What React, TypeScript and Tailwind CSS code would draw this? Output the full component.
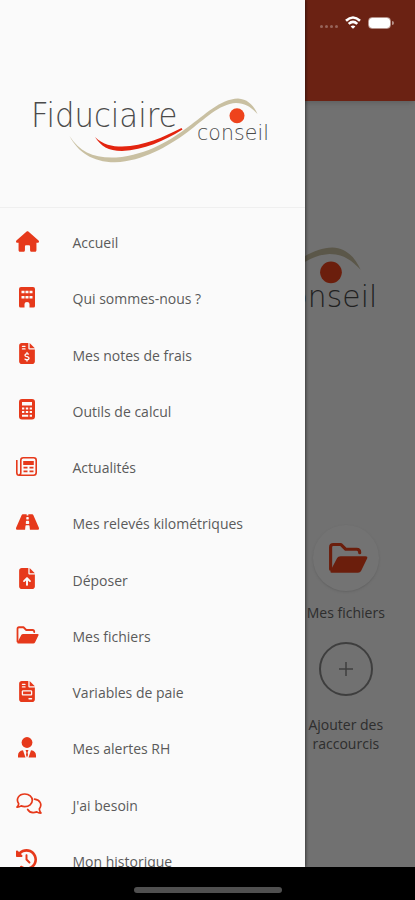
import type { ReactNode } from "react"
import {
    FaHouse,
    FaFileInvoiceDollar,
    FaFileInvoice,
    FaFileArrowUp,
    FaClockRotateLeft,
} from "react-icons/fa6"
import { FaRoad } from "react-icons/fa"

type MenuItem = {
    label:string;
    icon:ReactNode;
}

const FolderIcon = ({ className }:{ className:string }) => (
    <svg viewBox="0 0 46 36" className={className}>
        <path
            d="M3 31V5.500Q3 2.500 6 2.500H15L20.500 8H33Q36.500 8 36.500 12"
            fill="none"
            stroke="currentColor"
            strokeWidth="3.600"
            strokeLinecap="round"
            strokeLinejoin="round"
        />
        <path
            d="M14.500 16H43Q46 16 45 18.500L38 33Q37 35 34.500 35H4Q2 35 3 32.500L10.500 18Q11.500 16 14.500 16Z"
            fill="currentColor"
        />
    </svg>
)

const BuildingIcon = () => (
    <svg viewBox="0 0 16 21" className="h-[21px] w-4">
        <path
            fill="currentColor"
            fillRule="evenodd"
            d="M2 0H14Q16 0 16 2V19Q16 20.500 14.500 20.500H10.500V17Q10.500 15 8 15T5.500 17V20.500H1.500Q0 20.500 0 19V2Q0 0 2 0ZM2.500 3.800V6.300H5.500V3.800ZM6.500 3.800V6.300H9.500V3.800ZM10.500 3.800V6.300H13.500V3.800ZM2.500 9V11.500H5.500V9ZM6.500 9V11.500H9.500V9ZM10.500 9V11.500H13.500V9Z"
        />
    </svg>
)

const CalculatorIcon = () => (
    <svg viewBox="0 0 16 21" className="h-[21px] w-4">
        <path
            fill="currentColor"
            fillRule="evenodd"
            d="M3 0H13Q16 0 16 3V17.500Q16 20.500 13 20.500H3Q0 20.500 0 17.500V3Q0 0 3 0ZM3 3V6.500H13V3ZM3 8.500V10.500H5.300V8.500ZM6.800 8.500V10.500H9.200V8.500ZM10.700 8.500V10.500H13V8.500ZM3 12V14H5.300V12ZM6.800 12V14H9.200V12ZM10.700 12V14H13V12ZM3 15.700V17.700H9.200V15.700ZM10.700 15.700V17.700H13V15.700Z"
        />
    </svg>
)

const NewsIcon = () => (
    <svg viewBox="0 0 21 19" className="h-[19px] w-[21px]" fill="none" stroke="currentColor">
        <path strokeWidth="1.600" d="M.8 3V15.500Q.8 18.200 3 18.200H17.500Q20.200 18.200 20.200 15.500V3.300Q20.200 .8 17.700 .8H7.300Q4.800 .8 4.800 3.300V15.500Q4.800 18 3 18" />
        <path fill="currentColor" stroke="none" d="M7.200 4H17.800V8H7.200ZM7.500 9.800H11.500V11.500H7.500ZM13.500 9.800H17.500V11.500H13.500ZM7.500 13.500H11.500V15.200H7.500ZM13.500 13.500H17.500V15.200H13.500Z" />
    </svg>
)

const AdvisorIcon = () => (
    <svg viewBox="0 0 18 21" className="h-[21px] w-[18px]" fill="currentColor">
        <circle cx="9" cy="5.500" r="5.400" />
        <path d="M5 13.300L7.500 20.500H0V18.500Q0 14 5 13.300ZM13 13.300L10.500 20.500H18V18.500Q18 14 13 13.300ZM7.500 13H10.500L9.600 15.200L10 18L9 20.500L8 18L8.400 15.200Z" />
    </svg>
)

const ChatIcon = () => (
    <svg viewBox="0 0 26 22" className="h-[22px] w-[26px]" fill="none" stroke="currentColor" strokeWidth="1.700" strokeLinecap="round" strokeLinejoin="round">
        <path d="M2.700 10.800C-.5 6 2.800 1 8.800 1C13.300 1 16.300 3.800 16.300 7.300C16.300 11 13 13.600 8.800 13.600Q6.800 13.600 5.200 12.900Q3.200 14.300 1 14.200Q2.500 12.600 2.700 10.800Z" />
        <path d="M18.500 6.200C24.300 6.800 26.500 11.800 23.300 16Q23.600 18.500 25 20Q22.600 20.200 20.800 18.900C17 20.200 13.300 19.200 11.700 16.500" />
    </svg>
)

const menuItems:MenuItem[] = [
    { label:"Accueil", icon:<FaHouse className="h-[21px] w-[23px]" /> },
    { label:"Qui sommes-nous ?", icon:<BuildingIcon /> },
    { label:"Mes notes de frais", icon:<FaFileInvoiceDollar className="h-[21px] w-4" /> },
    { label:"Outils de calcul", icon:<CalculatorIcon /> },
    { label:"Actualités", icon:<NewsIcon /> },
    { label:"Mes relevés kilométriques", icon:<FaRoad className="h-[22px] w-[23px]" /> },
    { label:"Déposer", icon:<FaFileArrowUp className="h-[21px] w-4" /> },
    { label:"Mes fichiers", icon:<FolderIcon className="h-[18px] w-[23px]" /> },
    { label:"Variables de paie", icon:<FaFileInvoice className="h-[21px] w-4" /> },
    { label:"Mes alertes RH", icon:<AdvisorIcon /> },
    { label:"J'ai besoin", icon:<ChatIcon /> },
    { label:"Mon historique", icon:<FaClockRotateLeft className="h-[21px] w-[21px]" /> },
]

const Logo = ({ className }:{ className:string }) => (
    <svg viewBox="28 92 246 76" className={className}>
        <text x="31" y="127" fontSize="34" textLength="146.500" lengthAdjust="spacingAndGlyphs" fill="#4a4a4a" className="font-['DejaVu_Sans'] font-extralight">
            Fiduciaire
        </text>
        <text x="197" y="140" fontSize="20.500" textLength="72" lengthAdjust="spacing" fill="#4a4a4a" className="font-['DejaVu_Sans'] font-extralight">
            conseil
        </text>
        <path
            d="M69.500 136C80 152 94 158.500 116 157.500C148 155 172 139 188 127C205 115 220 99 238 98.500C248 99 254 106 257.500 114C251 107 245 103 236 103C219 104 205 119 187 132.500C167 147 143 161 115 162.300C92 162 78 152 69.500 136Z"
            fill="#c9c0a2"
        />
        <path d="M95 137C103 145 112 146.500 122 146.500C144 146 164 137 181.500 128L182.500 129.500C164 141 144 150 122 151C108 151 101 146 95 137Z" fill="#e3240f" />
        <circle cx="237" cy="115.700" r="7.500" fill="#ee431c" />
    </svg>
)

const StatusIcons = () => (
    <div className="flex items-center pt-4 pr-[21px] text-white">
        <div className="mt-2 mr-[7px] flex gap-[2px]">
            <i className="size-[3px] rounded-full bg-white/30" />
            <i className="size-[3px] rounded-full bg-white/30" />
            <i className="size-[3px] rounded-full bg-white/30" />
            <i className="size-[3px] rounded-full bg-white/30" />
        </div>
        <svg viewBox="0 0 16 13" className="mr-[7px] h-[13px] w-4" fill="none" stroke="currentColor" strokeWidth="2.600">
            <path d="M1 4.700Q8 -1.700 15 4.700" />
            <path d="M3.700 7.900Q8 4 12.300 7.900" />
            <path d="M8 12.800L5.600 10.400Q8 8.400 10.400 10.400Z" fill="currentColor" stroke="none" />
        </svg>
        <div className="h-3 w-[23px] rounded-[4px] border border-white/50">
            <div className="h-full rounded-[3px] bg-white" />
        </div>
        <div className="ml-px h-1 w-[2px] rounded-r bg-white/50" />
    </div>
)

// page under the drawer, dimmed by the backdrop
const HomePage = () => (
    <div className="flex h-full flex-col bg-[#fafafa]">
        <div className="h-[101px] shrink-0 bg-[#ee4c2a] shadow-md" />
        <div className="flex justify-center pt-[137px]">
            <Logo className="mr-[3px] h-[110px] w-[357px]" />
        </div>
        <div className="mt-[177px] grid grid-cols-3 text-center text-sm leading-[19px] text-[#666]">
            <div className="col-start-3 flex flex-col items-center">
                <div className="flex size-[66px] items-center justify-center rounded-full bg-white pl-1 text-[#ee431c] shadow">
                    <FolderIcon className="h-8 w-10" />
                </div>
                <div className="mt-3">Mes fichiers</div>
                <div className="mt-5 flex size-[54px] items-center justify-center rounded-full border-2 border-[#8a8a8a]">
                    <svg viewBox="0 0 14 14" className="size-3.5" stroke="#8a8a8a" strokeWidth="1.500">
                        <path d="M7 0V14M0 7H14" />
                    </svg>
                </div>
                <div className="mt-[19px] w-[90px]">Ajouter des raccourcis</div>
            </div>
        </div>
    </div>
)

const Drawer = () => (
    <div className="absolute inset-y-0 left-0 flex w-[305px] flex-col overflow-hidden bg-[#fafafa] shadow-[1px_0_3px_rgba(0,0,0,0.5)]">
        <div className="flex h-[208px] shrink-0 items-start border-b border-[#efefef] pt-[92px] pl-7">
            <Logo className="h-[76px] w-[246px]" />
        </div>
        <div className="pt-[7px]">
            {
                menuItems.map((item)=>(
                    <div key={item.label} className="flex h-[56.250px] items-center">
                        <div className="flex w-[72.500px] shrink-0 pb-1 text-[#e6391b]">
                            <div className="ml-4 flex min-w-[21px] justify-center">{item.icon}</div>
                        </div>
                        <div className="text-sm whitespace-nowrap text-[#5a5a5a]">{item.label}</div>
                    </div>
                ))
            }
        </div>
    </div>
)

export const App = () => {
    return (
        <div className="flex h-[900px] w-[415px] flex-col overflow-hidden bg-black font-['Open_Sans','Noto_Sans',sans-serif]">
            <div className="relative h-[867px] shrink-0 overflow-hidden">
                <HomePage />
                <div className="absolute inset-0 flex items-start justify-end bg-black/55">
                    <StatusIcons />
                </div>
                <Drawer />
            </div>
            <div className="flex flex-1 items-end justify-center pb-[7px]">
                <div className="h-[6px] w-[148px] rounded-full bg-[#505050]" />
            </div>
        </div>
    )
}

export default App
